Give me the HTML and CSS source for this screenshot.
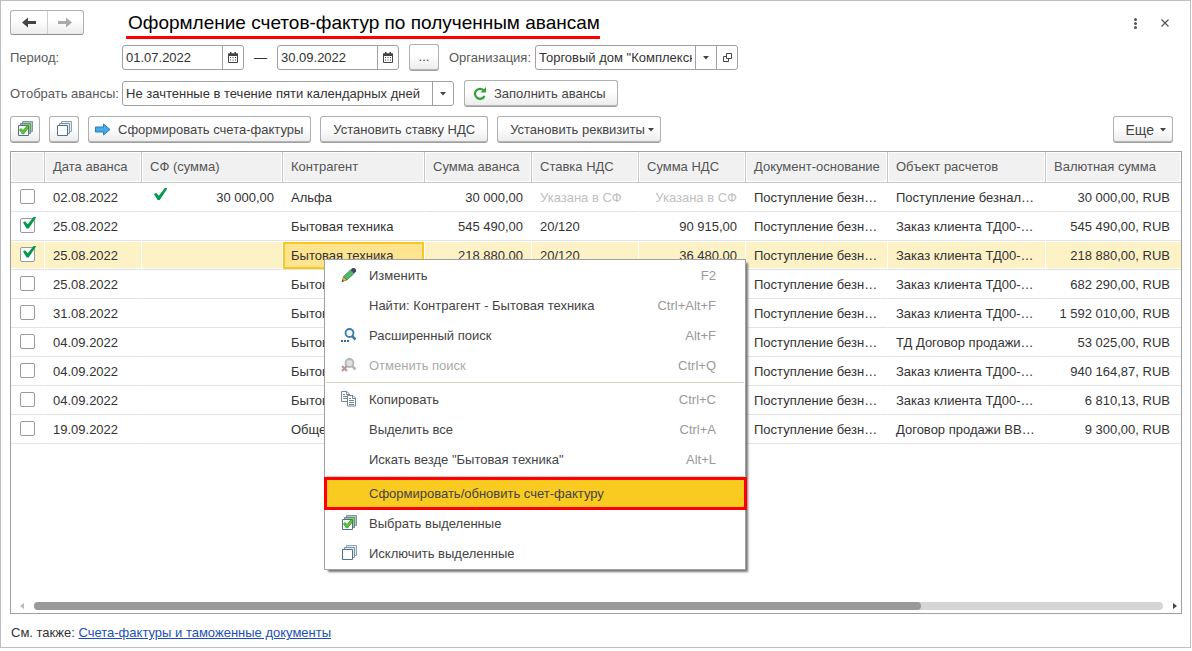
FILE: index.html
```html
<!DOCTYPE html>
<html lang="ru">
<head>
<meta charset="utf-8">
<title>Оформление счетов-фактур по полученным авансам</title>
<link rel="stylesheet" href="styles.css">
</head>
<body>
<svg class="defs" aria-hidden="true">
  <symbol id="stack" viewBox="0 0 16 16">
    <path d="M5.500 2.500v-2h10v10h-2" fill="#e4ecf0" stroke="#8ba4b2"/>
    <path d="M3.500 4.500v-2h10v10h-2" fill="#e4ecf0" stroke="#7793a4"/>
    <path d="M1.500 4.500h10v10h-10z" fill="#fff" stroke="#4f7189"/>
  </symbol>
  <symbol id="stack-check" viewBox="0 0 16 16">
    <path d="M5.500 2.500v-2h10v10h-2z" fill="#a9d39c" stroke="#7c98a8"/>
    <path d="M3.500 4.500v-2h10v10h-2z" fill="#8fca7c" stroke="#6c8a9c"/>
    <path d="M1.500 4.500h10v10h-10z" fill="#fff" stroke="#4f7189"/>
    <path d="M2.500 9l1.500-1.500 2 2L10.500 4.500l1.500 1.500-5.500 7h-1z" fill="#5cc92f" stroke="#2f8f1c" stroke-width=".8"/>
  </symbol>
  <symbol id="caret" viewBox="0 0 6 5"><path d="M0 1h6L3 4.500z" fill="#444"/></symbol>
  <symbol id="calendar" viewBox="0 0 10 11">
    <path d="M.5 2h9v8.500h-9z" fill="#fff" stroke="#444"/>
    <path d="M0 1.500h10V4H0zM2 0h1.500v2H2zM6.500 0H8v2H6.500z" fill="#444"/>
    <path d="M2 5h1v1H2zm2.500 0h1v1h-1zM7 5h1v1H7zM2 7.500h1v1H2zm2.500 0h1v1h-1zm2.500 0h1v1H7z" fill="#444"/>
  </symbol>
</svg>

<main class="window">
  <header class="titlebar">
    <div class="nav">
      <button class="nav-btn" type="button" aria-label="Назад"><svg width="14" height="11" viewBox="0 0 14 11"><path d="M0 5.500L6 .5V4h8v3H6v3.500z" fill="#444"/></svg></button>
      <button class="nav-btn" type="button" aria-label="Вперед"><svg width="14" height="11" viewBox="0 0 14 11"><path d="M14 5.500L8 .5V4H0v3h8v3.500z" fill="#aaa"/></svg></button>
    </div>
    <h1 class="title">Оформление счетов-фактур по полученным авансам</h1>
    <div class="window-tools">
      <button class="plain" type="button" aria-label="Меню"><svg width="3" height="11" viewBox="0 0 3 11"><g fill="#555"><circle cx="1.500" cy="1.500" r="1.500"/><circle cx="1.500" cy="5.500" r="1.500"/><circle cx="1.500" cy="9.500" r="1.500"/></g></svg></button>
      <button class="plain" type="button" aria-label="Закрыть"><svg width="8" height="8" viewBox="0 0 8 8"><path d="M.5.5l7 7m0-7l-7 7" stroke="#555" stroke-width="1.200"/></svg></button>
    </div>
  </header>

  <form class="filters">
    <div class="line">
      <label class="label" for="from">Период:</label>
      <div class="field date"><input id="from" type="text" value="01.07.2022"><button class="addon" type="button" aria-label="Выбрать дату начала"><svg width="10" height="11"><use href="#calendar"/></svg></button></div>
      <span class="dash">—</span>
      <div class="field date"><input type="text" value="30.09.2022" aria-label="Дата окончания"><button class="addon" type="button" aria-label="Выбрать дату окончания"><svg width="10" height="11"><use href="#calendar"/></svg></button></div>
      <button class="btn dots" type="button">...</button>
      <label for="org" class="org-label">Организация:</label>
      <div class="field org">
        <select id="org"><option>Торговый дом "Комплексный"</option></select>
        <span class="addon"><svg width="6" height="5"><use href="#caret"/></svg></span>
        <button class="addon" type="button" aria-label="Открыть"><svg width="9" height="9" viewBox="0 0 9 9"><path d="M3.500.5h5v5h-5z" fill="#fff" stroke="#444"/><path d="M3 3.500H.5v5h5V6" fill="none" stroke="#444"/></svg></button>
      </div>
    </div>
    <div class="line">
      <label class="label" for="pick">Отобрать авансы:</label>
      <div class="field pick">
        <select id="pick"><option>Не зачтенные в течение пяти календарных дней</option></select>
        <span class="addon"><svg width="6" height="5"><use href="#caret"/></svg></span>
      </div>
      <button class="btn fill" type="button"><svg width="14" height="13" viewBox="0 0 14 13"><path d="M11.500 9A5 5 0 1 1 10.500 3.200" fill="none" stroke="#2fa33a" stroke-width="2.200"/><path d="M7.500 5.500H13V0z" fill="#2fa33a"/></svg>Заполнить авансы</button>
    </div>
  </form>

  <div class="toolbar">
    <button class="btn square" type="button" aria-label="Выбрать все"><svg width="16" height="16"><use href="#stack-check"/></svg></button>
    <button class="btn square" type="button" aria-label="Исключить все"><svg width="16" height="16"><use href="#stack"/></svg></button>
    <button class="btn create" type="button"><svg width="16" height="13" viewBox="0 0 16 13"><path d="M.5 4h8V1L15 6.500 8.500 12V9h-8z" fill="#45aae8" stroke="#2b7fb5"/></svg>Сформировать счета-фактуры</button>
    <button class="btn" type="button">Установить ставку НДС</button>
    <button class="btn menu-btn" type="button">Установить реквизиты<svg width="6" height="5"><use href="#caret"/></svg></button>
    <button class="btn menu-btn more" type="button">Еще<svg width="6" height="5"><use href="#caret"/></svg></button>
  </div>

  <section class="grid">
    <table class="table">
      <colgroup><col class="c-check"><col class="c-date"><col class="c-sf"><col class="c-wide"><col class="c-num"><col class="c-num"><col class="c-num"><col class="c-wide"><col class="c-object"><col></colgroup>
      <thead>
        <tr><th></th><th>Дата аванса</th><th>СФ (сумма)</th><th>Контрагент</th><th>Сумма аванса</th><th>Ставка НДС</th><th>Сумма НДС</th><th>Документ-основание</th><th>Объект расчетов</th><th>Валютная сумма</th></tr>
      </thead>
      <tbody>
        <tr><td><input class="tick" type="checkbox" aria-label="Выбрать"></td><td>02.08.2022</td><td><div class="sf"><i class="mark"></i>30 000,00</div></td><td>Альфа</td><td class="num">30 000,00</td><td class="muted">Указана в СФ</td><td class="num muted">Указана в СФ</td><td>Поступление безн…</td><td>Поступление безнал…</td><td class="num last">30 000,00, RUB</td></tr>
        <tr><td><input class="tick" type="checkbox" checked aria-label="Выбрать"></td><td>25.08.2022</td><td></td><td>Бытовая техника</td><td class="num">545 490,00</td><td>20/120</td><td class="num">90 915,00</td><td>Поступление безн…</td><td>Заказ клиента ТД00-…</td><td class="num last">545 490,00, RUB</td></tr>
        <tr class="selected"><td><input class="tick" type="checkbox" checked aria-label="Выбрать"></td><td>25.08.2022</td><td></td><td class="current">Бытовая техника</td><td class="num">218 880,00</td><td>20/120</td><td class="num">36 480,00</td><td>Поступление безн…</td><td>Заказ клиента ТД00-…</td><td class="num last">218 880,00, RUB</td></tr>
        <tr><td><input class="tick" type="checkbox" aria-label="Выбрать"></td><td>25.08.2022</td><td></td><td>Бытовая техника</td><td></td><td></td><td></td><td>Поступление безн…</td><td>Заказ клиента ТД00-…</td><td class="num last">682 290,00, RUB</td></tr>
        <tr><td><input class="tick" type="checkbox" aria-label="Выбрать"></td><td>31.08.2022</td><td></td><td>Бытовая техника</td><td></td><td></td><td></td><td>Поступление безн…</td><td>Заказ клиента ТД00-…</td><td class="num last">1 592 010,00, RUB</td></tr>
        <tr><td><input class="tick" type="checkbox" aria-label="Выбрать"></td><td>04.09.2022</td><td></td><td>Бытовая техника</td><td></td><td></td><td></td><td>Поступление безн…</td><td>ТД Договор продажи…</td><td class="num last">53 025,00, RUB</td></tr>
        <tr><td><input class="tick" type="checkbox" aria-label="Выбрать"></td><td>04.09.2022</td><td></td><td>Бытовая техника</td><td></td><td></td><td></td><td>Поступление безн…</td><td>Заказ клиента ТД00-…</td><td class="num last">940 164,87, RUB</td></tr>
        <tr><td><input class="tick" type="checkbox" aria-label="Выбрать"></td><td>04.09.2022</td><td></td><td>Бытовая техника</td><td></td><td></td><td></td><td>Поступление безн…</td><td>Заказ клиента ТД00-…</td><td class="num last">6 810,13, RUB</td></tr>
        <tr><td><input class="tick" type="checkbox" aria-label="Выбрать"></td><td>19.09.2022</td><td></td><td>Общество</td><td></td><td></td><td></td><td>Поступление безн…</td><td>Договор продажи ВВ…</td><td class="num last">9 300,00, RUB</td></tr>
      </tbody>
    </table>

    <div class="scroll">
      <svg width="4" height="6" viewBox="0 0 4 6"><path d="M4 0v6L0 3z" fill="#bbb"/></svg>
      <div class="track"><div class="thumb"></div></div>
      <svg width="4" height="6" viewBox="0 0 4 6"><path d="M0 0v6l4-3z" fill="#444"/></svg>
    </div>

    <div class="menu" role="menu">
      <button class="item" type="button" role="menuitem"><svg class="icon" viewBox="0 0 16 16"><path d="M1 14.500L2.500 9.500 6 13z" fill="#e9b04f" stroke="#8a6a35" stroke-width=".7"/><path d="M2.500 9.500L9.500 3 13 6.500 6 13z" fill="#52b766" stroke="#327a44" stroke-width=".7"/><path d="M9.500 3l2-2h2L15 2.500v2l-2 2z" fill="#3d4a5c"/><path d="M.8 14.800l.6-2 1.400 1.400z" fill="#333"/></svg><span>Изменить</span><kbd>F2</kbd></button>
      <button class="item" type="button" role="menuitem"><span class="icon"></span><span>Найти: Контрагент - Бытовая техника</span><kbd>Ctrl+Alt+F</kbd></button>
      <button class="item" type="button" role="menuitem"><svg class="icon" viewBox="0 0 16 16"><circle cx="8.500" cy="6" r="4" fill="#eef6fa" stroke="#397da8" stroke-width="1.800"/><path d="M11 9l3.500 3.500" stroke="#397da8" stroke-width="2.500"/><path d="M0 13h2v2H0zm3 0h2v2H3zm3 0h2v2H6z" fill="#2f6d98"/></svg><span>Расширенный поиск</span><kbd>Alt+F</kbd></button>
      <button class="item" type="button" role="menuitem" disabled><svg class="icon" viewBox="0 0 16 16"><circle cx="8.500" cy="6" r="4" fill="#dedede" stroke="#b2b6b9" stroke-width="1.800"/><path d="M11 9l3.500 3.500" stroke="#b2b6b9" stroke-width="2.500"/><path d="M1 9l5 5m0-5l-5 5" stroke="#b39a9a" stroke-width="2.200"/></svg><span>Отменить поиск</span><kbd>Ctrl+Q</kbd></button>
      <hr class="rule">
      <button class="item" type="button" role="menuitem"><svg class="icon" viewBox="0 0 16 16"><path d="M.5.5H6L8.500 3v7.500h-8zM5.500 .5V3.500h3M2 3.500h2M2 5.500h4M2 7.500h4" fill="#fff" stroke="#758796"/><path d="M6.500 4.500H12L14.500 7v8h-8zM11.500 4.500V7.500h3M8 7.500h2M8 9.500h5M8 11.500h5M8 13.500h5" fill="#fff" stroke="#758796"/></svg><span>Копировать</span><kbd>Ctrl+C</kbd></button>
      <button class="item" type="button" role="menuitem"><span class="icon"></span><span>Выделить все</span><kbd>Ctrl+A</kbd></button>
      <button class="item" type="button" role="menuitem"><span class="icon"></span><span>Искать везде "Бытовая техника"</span><kbd>Alt+L</kbd></button>
      <hr class="rule">
      <button class="item active" type="button" role="menuitem"><span class="icon"></span><span>Сформировать/обновить счет-фактуру</span></button>
      <button class="item" type="button" role="menuitem"><svg class="icon" viewBox="0 0 16 16"><use href="#stack-check"/></svg><span>Выбрать выделенные</span></button>
      <button class="item" type="button" role="menuitem"><svg class="icon" viewBox="0 0 16 16"><use href="#stack"/></svg><span>Исключить выделенные</span></button>
    </div>
  </section>

  <footer class="footer">См. также: <a href="#docs">Счета-фактуры и таможенные документы</a></footer>
</main>
</body>
</html>
```
FILE: styles.css
```css
* { box-sizing: border-box; }

body {
  margin: 0;
  background: #fff;
  color: #333;
  font: 13px/16px "Liberation Sans", Arial, sans-serif;
}

button, input, select { font: inherit; color: inherit; }
button { cursor: pointer; }
svg { flex: none; display: block; }
.defs { position: absolute; width: 0; height: 0; }

.window {
  display: flex;
  flex-direction: column;
  min-height: calc(100vh - 3px);
  margin: 0 1px 3px 0;
  padding: 9px 8px 6px 9px;
  border: 1px solid #bfbfbf;
}

.titlebar { display: flex; align-items: flex-start; height: 34px; }

.nav {
  display: flex;
  width: 74px;
  height: 25px;
  border: 1px solid #b0b0b0;
  border-bottom-color: #8c8c8c;
  border-radius: 3px;
  background: linear-gradient(#fff 40%, #ececec);
}
.nav-btn {
  display: flex;
  flex: 1;
  align-items: center;
  justify-content: center;
  padding: 0;
  border: 0;
  background: none;
}
.nav-btn + .nav-btn { border-left: 1px solid #d0d0d0; }

.title {
  margin: 0 0 0 42px;
  padding-left: 2px;
  border-bottom: 3px solid #f00;
  color: #000;
  font-size: 19px;
  font-weight: normal;
  line-height: 26px;
}

.window-tools { display: flex; gap: 22px; margin: 6px 12px 0 auto; }
.plain {
  display: flex;
  align-items: center;
  justify-content: center;
  height: 14px;
  padding: 0 1px;
  border: 0;
  background: none;
}

.line { display: flex; align-items: center; height: 27px; margin-bottom: 9px; }
.label { width: 112px; color: #595959; white-space: nowrap; }

.field {
  display: flex;
  height: 25px;
  border: 1px solid #a0a0a0;
  border-radius: 3px;
  background: #fff;
}
.field input, .field select {
  flex: 1;
  min-width: 0;
  padding: 0 3px;
  border: 0;
  outline: 0;
  background: none;
  appearance: none;
}
.addon {
  display: flex;
  flex: none;
  align-items: center;
  justify-content: center;
  width: 21px;
  padding: 0;
  border: 0;
  border-left: 1px solid #a0a0a0;
  background: none;
}
.date { width: 122px; }
.dash { width: 33px; text-align: center; }
.dots { margin-left: 10px; }
.org-label { margin: 0 4px 0 10px; color: #595959; }
.org { width: 203px; }
.pick { width: 332px; }

.btn {
  display: flex;
  align-items: center;
  justify-content: center;
  height: 27px;
  padding: 0 12px;
  border: 1px solid #b0b0b0;
  border-bottom-color: #a0a0a0;
  border-radius: 3px;
  background: linear-gradient(#fff 40%, #ececec);
  box-shadow: inset 0 -1px #b4b4b4;
  color: #444;
  white-space: nowrap;
}
.btn.dots, .btn.square { width: 30px; padding: 0 0 1px; }
.btn.fill { gap: 7px; margin-left: 10px; padding: 0 11px 0 8px; }
.btn.create { gap: 7px; padding: 0 7px 0 6px; }
.btn.menu-btn { gap: 3px; padding: 0 6px 0 12px; }
.btn.more { gap: 6px; margin-left: auto; font-size: 14px; }

.toolbar { display: flex; gap: 9px; margin-bottom: 8px; padding-right: 9px; }

.grid {
  position: relative;
  display: flex;
  flex: 1;
  flex-direction: column;
  justify-content: space-between;
  border: 1px solid #a0a0a0;
}

.table { width: 100%; table-layout: fixed; border-spacing: 0; }
.c-check { width: 34px; }
.c-date { width: 97px; }
.c-sf { width: 141px; }
.c-wide { width: 142px; }
.c-num { width: 107px; }
.c-object { width: 158px; }

th {
  height: 31px;
  padding: 0 8px;
  border-right: 1px solid #c8c8c8;
  border-bottom: 1px solid #c8c8c8;
  background: #f1f1f1;
  box-shadow: inset 0 0 0 1px #fff;
  color: #555;
  font-weight: normal;
  text-align: left;
  white-space: nowrap;
}
td {
  height: 29px;
  padding: 2px 8px 0;
  border-right: 1px solid transparent;
  border-bottom: 1px solid #e2e2e2;
  overflow: hidden;
  white-space: nowrap;
}
th:last-child, td:last-child { border-right: 0; }
td:first-child { overflow: visible; }
.num { text-align: right; }
.last { padding-right: 11px; }
.muted { color: #c0c0c0; }

.selected td {
  border-right-color: #fff;
  background: #fdf1c6;
  box-shadow: inset 0 1px #fff, inset 0 -1px #fff;
}
.selected .current {
  background: #ffe48f;
  box-shadow: inset 0 1px #fff, inset 0 0 0 2px #f9c720, inset 0 3px #f9c720;
}

.sf { display: flex; align-items: flex-start; justify-content: space-between; padding-left: 4px; }

.tick {
  display: block;
  position: relative;
  width: 15px;
  height: 15px;
  margin: 0 0 4px 1px;
  border: 1px solid #999;
  border-radius: 2px;
  background: #fff;
  appearance: none;
}
.mark, .tick:checked::before {
  width: 13px;
  height: 12px;
  background: #00994d;
  clip-path: polygon(0 50%, 16% 40%, 37% 64%, 84% 0, 100% 0, 100% 8%, 44% 100%, 28% 100%);
}
.mark { margin: -2px 0 6px; }
.tick:checked::before { content: ""; position: absolute; top: -2px; left: 2px; }

.scroll { display: flex; align-items: center; gap: 10px; padding: 0 4px 3px 9px; }
.track { flex: 1; height: 8px; border-radius: 4px; background: #d5d5d5; }
.thumb { width: 78.6%; height: 8px; border-radius: 4px; background: #999; }

.menu {
  position: absolute;
  top: 107px;
  left: 313px;
  width: 422px;
  padding-bottom: 1px;
  border: 1px solid #a0a0a0;
  background: #fff;
  box-shadow: 3px 3px 2px -1px #777;
}
.item {
  position: relative;
  display: flex;
  align-items: center;
  width: 100%;
  height: 30px;
  padding: 0 29px 0 16px;
  border: 0;
  background: none;
  color: #444;
  text-align: left;
}
.item:disabled { color: #aaa; }
.item span, .item kbd { padding-top: 2px; }
.icon { flex: none; width: 16px; height: 16px; margin-right: 12px; }
kbd { margin-left: auto; color: #999; font: inherit; }
.rule { height: 1px; margin: 2px 1px 1px; border: 0; background: #d8d4c0; }
.item.active { background: #f9cb20; }
.item.active::after {
  content: "";
  position: absolute;
  inset: -1px -2px -2px -1px;
  border: 3px solid #f00;
}

.footer { padding: 11px 0 0 1px; }
.footer a { color: #1d50b8; }
```
